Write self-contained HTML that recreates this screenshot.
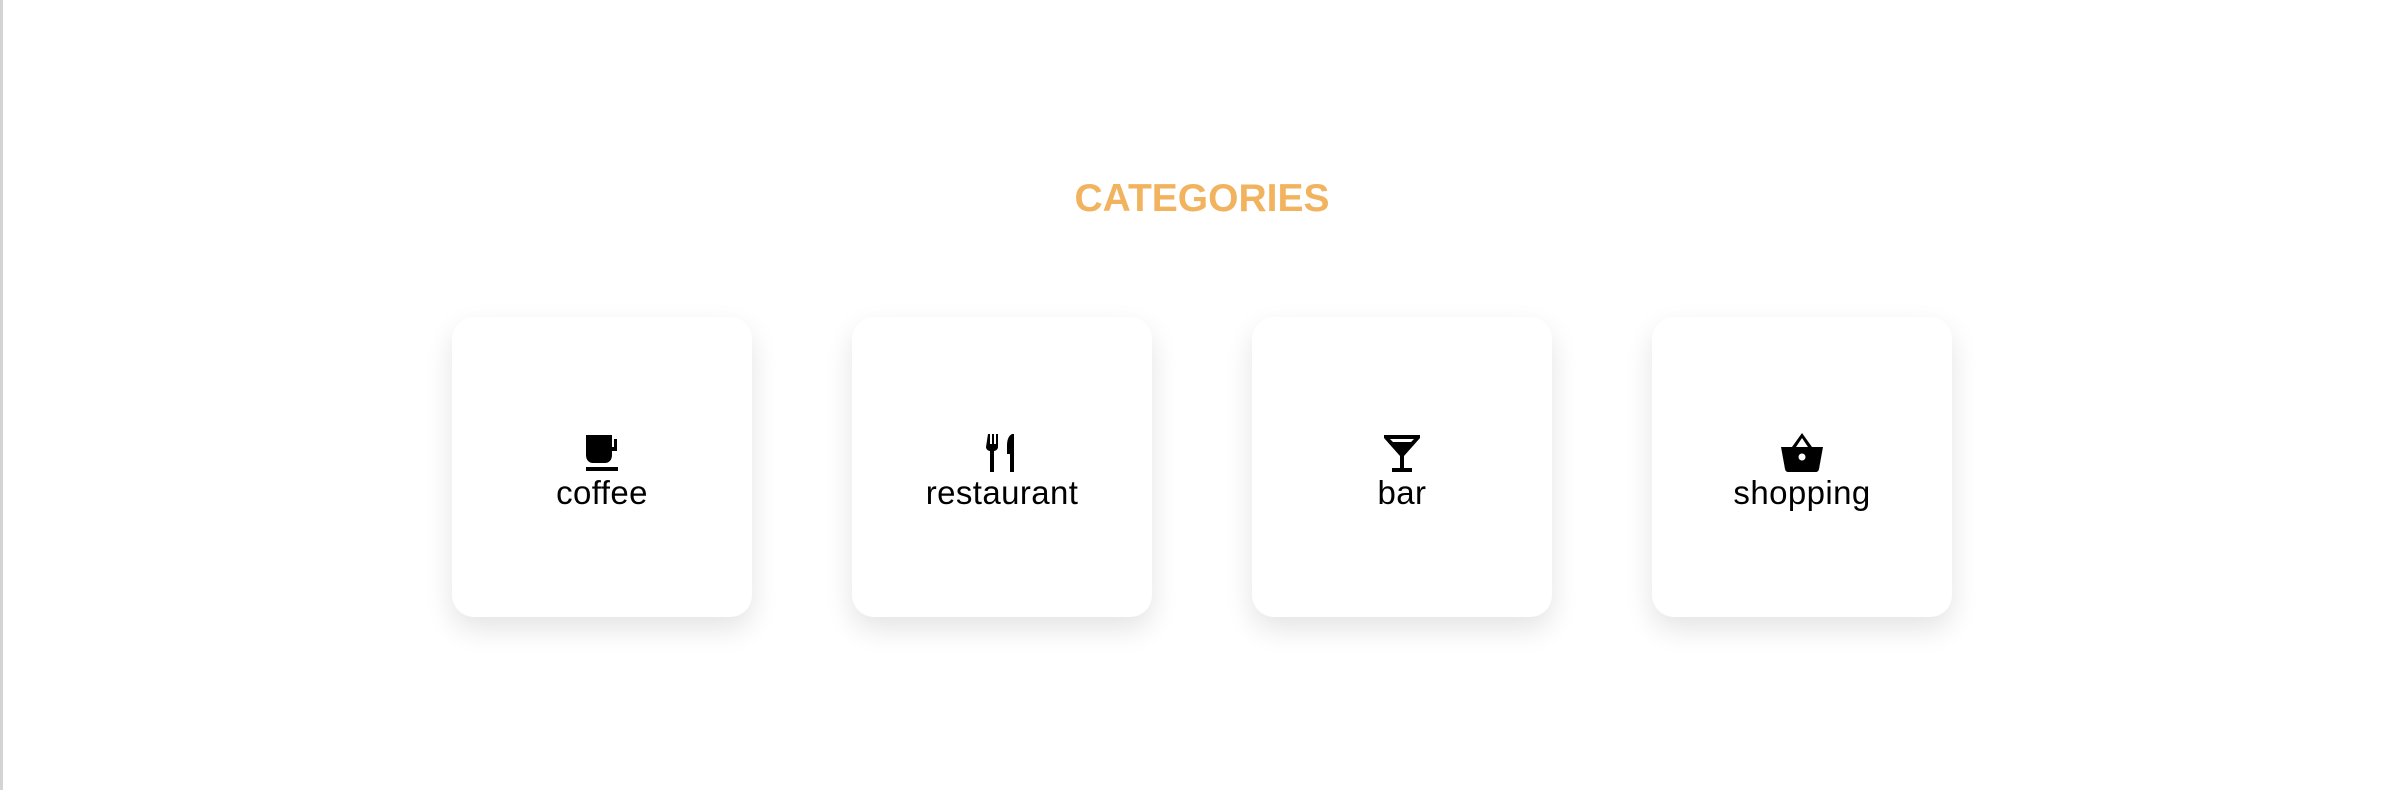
<!DOCTYPE html>
<html><head><style>
html,body{margin:0;padding:0;}
body{width:2404px;height:790px;background:#fff;position:relative;overflow:hidden;font-family:"Liberation Sans",sans-serif;}
.bl{position:absolute;left:0;top:0;width:3px;height:790px;background:#d4d4d4;}
h1{position:absolute;left:0;width:2404px;top:177px;margin:0;text-align:center;color:#f2b35e;font-size:39px;font-weight:bold;letter-spacing:0px;line-height:44px;}
.card{position:absolute;top:317px;width:300px;height:300px;background:#fff;border-radius:22px;box-shadow:0 12px 28px rgba(0,0,0,0.11);}
.in{position:absolute;left:0;right:0;top:116px;text-align:center;}
.in svg{display:block;margin:0 auto;}
.in span{display:block;font-size:33px;line-height:36px;color:#000;margin-top:2px;letter-spacing:0.4px;}
</style></head><body>
<div class="bl"></div>
<h1>CATEGORIES</h1>
<div class="card" style="left:452px"><div class="in">
<svg width="40" height="40" viewBox="0 0 40 40"><path d="M4 2h26v4h5v12h-5v4c0 5-3 8-7 8h-12c-4 0-7-3-7-8z M30 6v8h2v-8z" fill="#000" fill-rule="evenodd"/><rect x="4" y="34" width="32" height="4" fill="#000"/></svg>
<span>coffee</span></div></div>
<div class="card" style="left:852px"><div class="in">
<svg width="40" height="40" viewBox="0 0 40 40"><path d="M6 1h2v10h2v-10h2v10h2v-10h2v13c0 2-2 4-4 4v21h-4v-21c-2 0-4-2-4-4z" fill="#000"/><path d="M30 1c-4 2-5 7-5 12v8h3v18h4v-38z" fill="#000"/></svg>
<span>restaurant</span></div></div>
<div class="card" style="left:1252px"><div class="in">
<svg width="40" height="40" viewBox="0 0 40 40"><path d="M2 2h36v3l-16 18v12h8v4h-20v-4h8v-12l-16-18z M8 6l3 3h18l3-3z" fill="#000" fill-rule="evenodd"/></svg>
<span>bar</span></div></div>
<div class="card" style="left:1652px"><div class="in">
<svg width="44" height="40" viewBox="0 0 44 40"><path d="M22 0l10 14h-4l-6-9-6 9h-4z" fill="#000"/><path d="M1 14h42l-4 22c-0.5 2-1.5 3-3.5 3h-27c-2 0-3-1-3.5-3z" fill="#000"/><circle cx="22" cy="24" r="3.5" fill="#fff"/></svg>
<span>shopping</span></div></div>
</body></html>
